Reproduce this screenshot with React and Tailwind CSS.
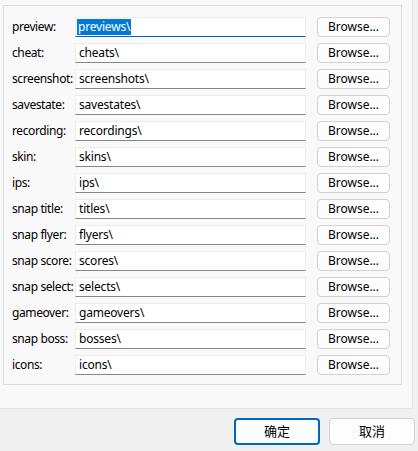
import React from "react";

const rows = [
  ["preview:", "previews\\"],
  ["cheat:", "cheats\\"],
  ["screenshot:", "screenshots\\"],
  ["savestate:", "savestates\\"],
  ["recording:", "recordings\\"],
  ["skin:", "skins\\"],
  ["ips:", "ips\\"],
  ["snap title:", "titles\\"],
  ["snap flyer:", "flyers\\"],
  ["snap score:", "scores\\"],
  ["snap select:", "selects\\"],
  ["gameover:", "gameovers\\"],
  ["snap boss:", "bosses\\"],
  ["icons:", "icons\\"],
];

export default function App() {
  return (
    <div
      className="w-[418px] h-[451px] bg-[#f0f0f0] flex flex-col text-[12px] text-black overflow-hidden"
      style={{ fontFamily: '"Segoe UI", "Noto Sans", "Noto Sans CJK SC", sans-serif' }}
    >
      <div className="w-[413px] h-[409px] bg-[#f9f9f9] border-r border-b border-[#e5e5e5] pt-[5px] pl-[3px] shrink-0">
        <div className="w-[399px] h-[380px] border border-[#dcdcdc] pt-[11px] pl-[8px] flex flex-col gap-[6px]">
          {rows.map(([label, value], i) => (
            <div key={label} className="flex items-center h-[20px]">
              <div className="w-[63px] shrink-0 whitespace-nowrap leading-none tracking-[-0.4px]">{label}</div>
              <div
                className={
                  "w-[231px] h-[20px] bg-white border border-[#ececec] border-b " +
                  (i === 0 ? "border-b-[#0067c0]" : "border-b-[#868686]") +
                  " flex items-center pl-[1px] leading-none whitespace-nowrap tracking-[-0.2px]"
                }
              >
                {i === 0 ? (
                  <span className="bg-[#0078d7] text-white h-[16px] flex items-center pl-[1px] pr-[1px]">
                    {value}
                  </span>
                ) : (
                  <span className="pl-[2px]">{value}</span>
                )}
              </div>
              <div className="ml-[11px] w-[73px] h-[20px] bg-[#fdfdfd] border border-[#d0d0d0] rounded-[4px] flex items-center justify-center leading-none whitespace-nowrap">
                Browse...
              </div>
            </div>
          ))}
        </div>
      </div>
      <div className="flex justify-end gap-[9px] pt-[9px] pr-[3px]">
        <div className="w-[86px] h-[27px] bg-[#fdfdfd] border-2 border-[#0067c0] rounded-[4px] flex items-center justify-center text-[13px]">
          确定
        </div>
        <div className="w-[86px] h-[27px] bg-[#fdfdfd] border border-[#d0d0d0] rounded-[4px] flex items-center justify-center text-[13px]">
          取消
        </div>
      </div>
    </div>
  );
}
